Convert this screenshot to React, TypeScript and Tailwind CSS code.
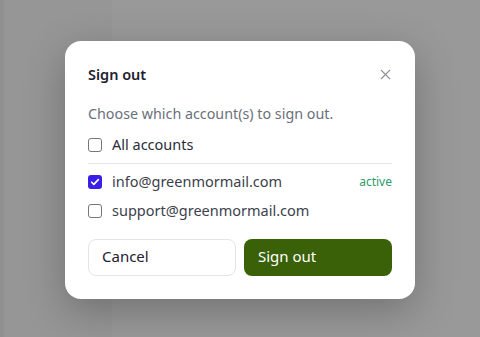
import { useState } from "react";

const accounts = [
  { email: "info@greenmormail.com", active: true },
  { email: "support@greenmormail.com", active: false },
];

function Box({ checked }: { checked: boolean }) {
  return checked ? (
    <span className="flex h-[14px] w-[14px] shrink-0 items-center justify-center rounded-[3px] bg-[#3a1fe6]">
      <svg viewBox="0 0 12 12" className="h-[10px] w-[10px]" fill="none">
        <path d="M2 6.3l2.6 2.6L10 3.2" stroke="#fff" strokeWidth="2" strokeLinecap="round" strokeLinejoin="round" />
      </svg>
    </span>
  ) : (
    <span className="h-[14px] w-[14px] shrink-0 rounded-[3px] border border-[#767676] bg-white" />
  );
}

export default function App() {
  const [sel, setSel] = useState<Record<string, boolean>>({ "info@greenmormail.com": true });

  return (
    <div className="relative flex h-[337px] w-[480px] overflow-hidden bg-white font-['Noto_Sans',sans-serif]">
      {/* page behind the overlay */}
      <div className="w-[4px] bg-[#f0f0f0]" />
      <div className="w-[108px] bg-[#fbfbfb]" />
      <div className="flex-1 bg-white" />

      {/* overlay */}
      <div className="absolute inset-0 flex items-start justify-center bg-black/40 pt-[41px]">
        <div className="w-[350px] rounded-2xl bg-white px-[23px] pb-[23px] pt-[23px] shadow-[0_12px_40px_rgba(0,0,0,0.25)]">
          <div className="flex items-center justify-between">
            <h2 className="text-[14.5px] font-semibold text-[#1f2030]">Sign out</h2>
            <button className="mr-[1px] text-[#8a8d9a]">
              <svg viewBox="0 0 12 12" className="h-[11px] w-[11px]" fill="none">
                <path d="M1.5 1.5l9 9M10.5 1.5l-9 9" stroke="currentColor" strokeWidth="1.5" strokeLinecap="round" />
              </svg>
            </button>
          </div>

          <p className="mt-[17px] text-[14.3px] text-[#6b6f7b]">Choose which account(s) to sign out.</p>

          <label className="mt-[10px] flex items-center gap-[10px] pb-[7px] text-[14.5px] text-[#2a2c38]">
            <Box checked={false} />
            All accounts
          </label>
          <div className="h-px bg-[#e4e5ea]" />

          <div className="mt-[7px] flex flex-col gap-[7px]">
            {accounts.map((a) => (
              <label
                key={a.email}
                className="flex items-center gap-[10px] text-[14.5px] text-[#3c3f4c]"
                onClick={() => setSel({ ...sel, [a.email]: !sel[a.email] })}
              >
                <Box checked={!!sel[a.email]} />
                <span className="flex-1">{a.email}</span>
                {a.active && <span className="text-[12px] text-[#2e9a6a]">active</span>}
              </label>
            ))}
          </div>

          <div className="mt-[18px] grid grid-cols-2 gap-[8px]">
            <button className="h-[37px] rounded-lg border border-[#e4e5ea] bg-white px-[13px] pb-[4px] text-left text-[15px] text-[#1f2030]">
              Cancel
            </button>
            <button className="h-[37px] rounded-lg bg-[#3b6108] px-[14px] pb-[4px] text-left text-[15px] text-white">
              Sign out
            </button>
          </div>
        </div>
      </div>
    </div>
  );
}
